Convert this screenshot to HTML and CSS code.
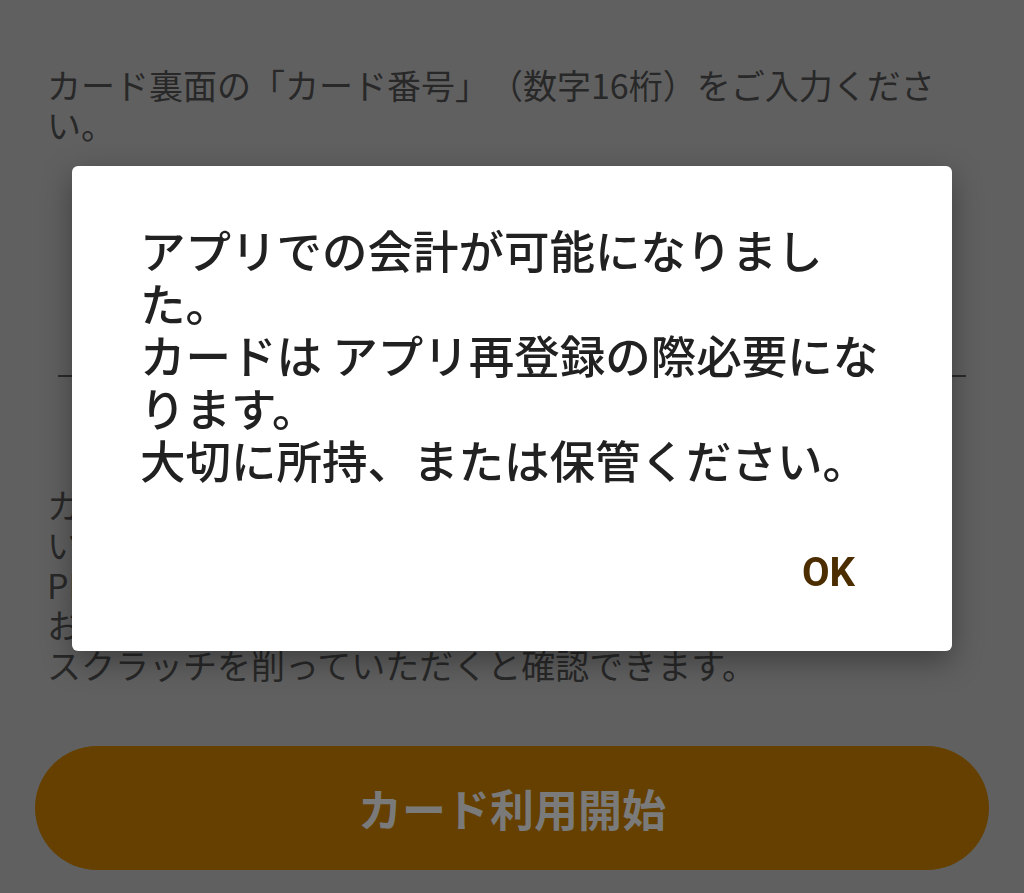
FILE: index.html
```html
<!DOCTYPE html>
<html lang="ja">
<head>
  <meta charset="UTF-8" />
  <meta name="viewport" content="width=device-width, initial-scale=1.0" />
  <title>カード登録</title>
  <link rel="stylesheet" href="styles.css">
</head>
<body>
  <div class="page">
    <p class="lead">カード裏面の「カード番号」（数字16桁）をご入力ください。</p>

    <div class="field"></div>

    <p class="hint">
      カード裏面に記載の「PIN番号」（数字4桁）を<br>
      いっしょにご入力ください。<br>
      PIN番号はカード裏面に記載されております。<br>
      お手元のカード裏面の銀色の部分の<br>
      スクラッチを削っていただくと確認できます。
    </p>

    <button class="start-btn">カード利用開始</button>
  </div>

  <!-- Alert dialog -->
  <div class="dialog">
    <p class="dialog-msg">アプリでの会計が可能になりました。<br>カードは アプリ再登録の際必要になります。<br>大切に所持、または保管ください。</p>
    <div class="dialog-actions">
      <button class="dialog-btn">OK</button>
    </div>
  </div>
</body>
</html>
```

FILE: styles.css
```css
body {
  margin: 0;
  background: #606060;
  font-family: "Noto Sans CJK JP", "Noto Sans", sans-serif;
  color: #282828;
  text-spacing-trim: space-all;
}
.page {
  padding: 65px 35px 0 35px;
}
.lead {
  margin: 0;
  padding: 0 39px 0 12px;
  font-size: 34px;
  line-height: 40px;
}
.field {
  height: 230px;
  margin: 0 23px;
  border-bottom: 2px solid #2a2a2a;
}
.hint {
  margin: 108px 0 0 0;
  padding: 0 12px;
  font-size: 34px;
  line-height: 40px;
  white-space: nowrap;
}
.start-btn {
  display: block;
  width: 100%;
  height: 124px;
  margin-top: 61px;
  border: none;
  border-radius: 62px;
  background: #654000;
  color: #7a7a7a;
  font-family: "Noto Sans CJK JP", sans-serif;
  font-size: 44px;
  font-weight: 700;
}
.dialog {
  position: fixed;
  top: 166px;
  left: 72px;
  width: 880px;
  background: #ffffff;
  border-radius: 6px;
  box-shadow: 0 10px 30px rgba(0, 0, 0, 0.35);
}
.dialog-msg {
  margin: 0;
  padding: 57px 68px 0 68px;
  font-size: 45.5px;
  line-height: 52.5px;
  font-weight: 500;
  color: #212121;
}
.dialog-actions {
  display: flex;
  justify-content: flex-end;
  padding: 63px 97px 54px 0;
}
.dialog-btn {
  padding: 0;
  border: none;
  background: none;
  font-family: Roboto, "Liberation Sans", sans-serif;
  font-size: 40px;
  line-height: 48px;
  font-weight: 700;
  color: #4b2d00;
}
```
